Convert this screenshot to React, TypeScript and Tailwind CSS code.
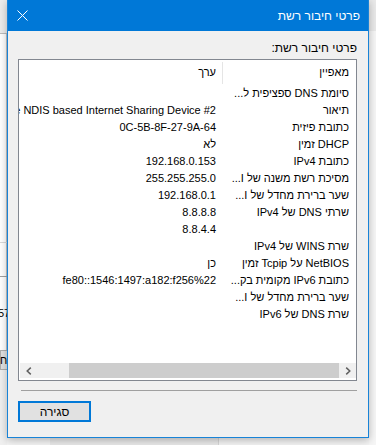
import React from "react";

const ROWS: [string, string][] = [
  ["סיומת DNS ספציפית ל...", ""],
  ["תיאור", "Remote NDIS based Internet Sharing Device #2"],
  ["כתובת פיזית", "0C-5B-8F-27-9A-64"],
  ["DHCP זמין", "לא"],
  ["כתובת IPv4", "192.168.0.153"],
  ["מסיכת רשת משנה של I...", "255.255.255.0"],
  ["שער ברירת מחדל של I...", "192.168.0.1"],
  ["שרתי DNS של IPv4", "8.8.8.8"],
  ["", "8.8.4.4"],
  ["שרת WINS של IPv4", ""],
  ["NetBIOS על Tcpip זמין", "כן"],
  ["כתובת IPv6 מקומית בק...", "fe80::1546:1497:a182:f256%22"],
  ["שער ברירת מחדל של I...", ""],
  ["שרת DNS של IPv6", ""],
];

function Chevron({ left }: { left?: boolean }) {
  return (
    <svg width="6" height="8" viewBox="0 0 6 8">
      <polyline
        points={left ? "4.8,0.6 1.2,4 4.8,7.4" : "1.2,0.6 4.8,4 1.2,7.4"}
        fill="none"
        stroke="#606060"
        strokeWidth="1.5"
      />
    </svg>
  );
}

function Row({ prop, value }: { prop: string; value: string }) {
  return (
    <div className="flex h-[17px] items-center">
      <div className="w-[134px] shrink-0 overflow-hidden whitespace-nowrap pr-[7px] text-right">{prop}</div>
      <div className="min-w-0 flex-1 overflow-hidden whitespace-nowrap pr-[6px] text-right">{value}</div>
    </div>
  );
}

function BackgroundLeft() {
  return (
    <div className="flex h-[445px] w-[7px] shrink-0 flex-col overflow-hidden bg-[#f0f0f0]">
      <div className="h-[33px] bg-[#ececec]" />
      <div className="h-px bg-[#bcbcbc]" />
      <div className="h-[208px] border-r border-[#c4c4c4] bg-white" />
      <div className="h-px bg-[#dadada]" />
      <div className="h-[33px] border-r border-[#c4c4c4] bg-white" />
      <div className="h-px bg-[#a0a0a0]" />
      <div className="flex h-[73px] flex-col border-r border-[#c4c4c4] bg-white pt-[29px]">
        <span className="ml-[-2px] whitespace-nowrap text-[11px] leading-[14px] text-black">57</span>
      </div>
      <div className="flex h-[20px] items-center border-y border-l border-[#adadad] bg-[#e1e1e1]">
        <span className="ml-[-1px] text-[11px] text-black">ח</span>
      </div>
      <div className="flex-1 bg-[#f0f0f0]" />
    </div>
  );
}

export default function App() {
  return (
    <div className="flex h-[445px] w-[376px] overflow-hidden bg-[#f0f0f0] font-['Liberation_Sans','DejaVu_Sans',sans-serif] text-black">
      <BackgroundLeft />

      <div className="flex w-[362px] shrink-0 flex-col">
        <div className="relative z-10 flex h-[438px] flex-col border-x border-b border-[#1883d7] shadow-[0_2px_8px_rgba(0,0,0,0.28)]">
          <div className="flex h-[31px] shrink-0 items-center justify-between bg-[#0078d7] pl-[9px] pr-[8px] text-[12px] text-white">
            <svg width="11" height="11" viewBox="0 0 11 11">
              <path d="M0.5 0.5 L10.5 10.5 M10.5 0.5 L0.5 10.5" stroke="#fff" strokeWidth="1" />
            </svg>
            <span dir="rtl">פרטי חיבור רשת</span>
          </div>

          <div dir="rtl" className="flex flex-1 flex-col bg-[#f0f0f0] pt-[9px]">
            <div className="h-[16px] pr-[11px] text-[12px] leading-[16px]">פרטי חיבור רשת:</div>

            <div className="mr-[11px] ml-[10px] mt-[3px] flex h-[322px] flex-col border border-[#828790] bg-white text-[11px]">
              <div className="flex h-[25px] shrink-0 items-center">
                <div className="flex h-[22px] w-[134px] shrink-0 items-center border-l border-[#e5e5e5] pr-[7px]">
                  מאפיין
                </div>
                <div className="flex-1 pr-[6px]">ערך</div>
              </div>
              {ROWS.map(([p, v], i) => (
                <Row key={i} prop={p} value={v} />
              ))}
              <div className="flex-1" />
              <div dir="ltr" className="mb-[2px] ml-[1px] flex h-[15px] shrink-0 bg-[#f0f0f0]">
                <div className="flex w-[17px] items-center justify-center">
                  <Chevron left />
                </div>
                <div className="w-[32px]" />
                <div className="flex-1 bg-[#cdcdcd]" />
                <div className="flex w-[17px] items-center justify-center">
                  <Chevron />
                </div>
              </div>
            </div>

            <div className="mr-[11px] ml-[13px] mt-[9px] h-px bg-[#a0a0a0]" />

            <button className="ml-[10px] mt-[10px] flex h-[21px] w-[73px] items-center justify-center self-end border-2 border-[#0078d7] bg-[#e1e1e1] text-[12px] text-black">
              סגירה
            </button>
          </div>
        </div>
        <div className="flex h-[7px] shrink-0">
          <div className="w-[43px] bg-[#f4f4f4]" />
          <div className="w-[169px] border-r border-[#d6d6d6] bg-[#e9e9e9]" />
          <div className="flex-1 bg-[#f4f4f4]" />
        </div>
      </div>

      <div className="flex h-[445px] w-[7px] shrink-0 flex-col bg-[#f6f6f6]">
        <div className="h-[31px] bg-[#e9e9e9]" />
        <div className="flex-1" />
      </div>
    </div>
  );
}
